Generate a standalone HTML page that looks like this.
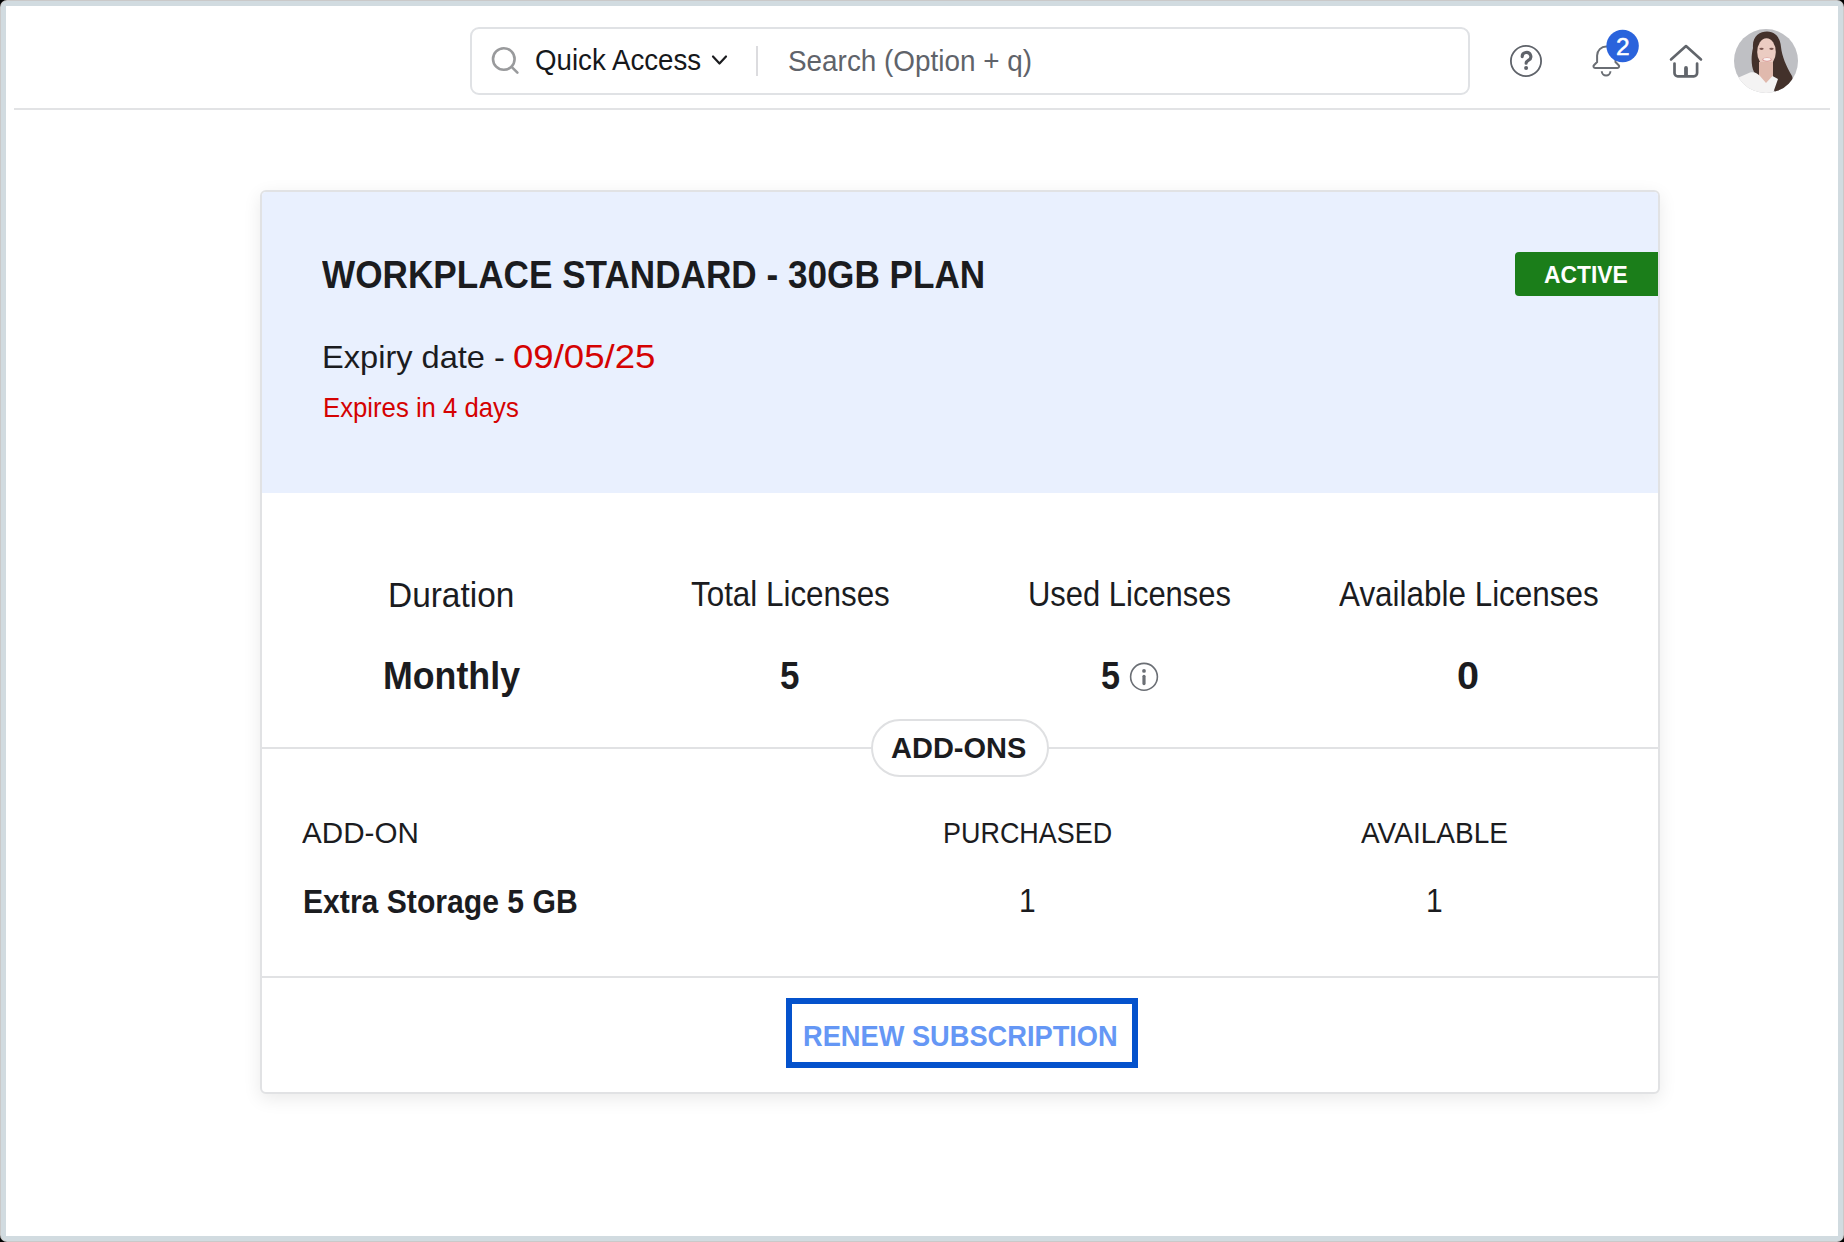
<!DOCTYPE html>
<html><head><meta charset="utf-8">
<style>
html,body{margin:0;padding:0;width:1844px;height:1242px;overflow:hidden;background:#000;}
body{font-family:"Liberation Sans", sans-serif;position:relative;}
.frame{position:absolute;left:0;top:0;width:1844px;height:1242px;border-radius:7px;background:#cac9c9;}
.frame2{position:absolute;left:1px;top:1px;width:1842px;height:1240px;border-radius:6px;background:#d1dbe0;}
.page{position:absolute;left:6px;top:6px;width:1832px;height:1230px;background:#fff;}
.t{position:absolute;white-space:nowrap;transform-origin:0 0;}
.hline{position:absolute;left:14px;top:108px;width:1816px;height:2px;background:#e2e3e5;}
.search{position:absolute;left:470px;top:27px;width:996px;height:64px;border:2px solid #e0e2e5;border-radius:9px;box-sizing:content-box;}
.card{position:absolute;left:260px;top:190px;width:1396px;height:900px;border:2px solid #e1e2e4;border-radius:6px;background:#fff;box-shadow:0 5px 18px rgba(0,0,0,0.085);overflow:hidden;}
.cardhead{position:absolute;left:0;top:0;width:1396px;height:301px;background:#e9f0fe;}
.badge{position:absolute;left:1253px;top:60px;width:143px;height:44px;background:#1b7e1a;border-radius:4px 0 0 4px;}
.sep1{position:absolute;left:262px;top:747px;width:1396px;height:2px;background:#e1e2e4;}
.pill{position:absolute;left:871px;top:719px;width:174px;height:54px;border:2px solid #dfe0e2;border-radius:30px;background:#fff;}
.sep2{position:absolute;left:262px;top:976px;width:1396px;height:2px;background:#e1e2e4;}
.btn{position:absolute;left:786px;top:998px;width:340px;height:58px;border:6px solid #0452cc;background:#fff;}
</style></head><body>
<div class="frame"></div><div class="frame2"></div>
<div class="page"></div>
<div class="hline"></div>
<div class="search"></div>
<svg style="position:absolute;left:0;top:0" width="1844" height="200">
  <!-- search icon -->
  <circle cx="503.8" cy="59" r="10.8" fill="none" stroke="#999a9c" stroke-width="2.6"/>
  <line x1="511.6" y1="66.8" x2="517.4" y2="72.6" stroke="#999a9c" stroke-width="2.6" stroke-linecap="round"/>
  <!-- chevron -->
  <polyline points="713,56.5 719.5,63.5 726,56.5" fill="none" stroke="#1b1c1f" stroke-width="2.2" stroke-linecap="round" stroke-linejoin="round"/>
  <!-- divider -->
  <line x1="757" y1="46" x2="757" y2="76" stroke="#dcdcdf" stroke-width="2"/>
  <!-- help -->
  <circle cx="1526" cy="61" r="15.1" fill="none" stroke="#5f636a" stroke-width="1.8"/>
  <path d="M1522.2 56.7 a4.3 4.1 0 1 1 6.4 3.4 c-1.7 1.0 -2.5 1.8 -2.5 3.1 v0.1" fill="none" stroke="#5f636a" stroke-width="3.1" stroke-linecap="round"/>
  <circle cx="1526.1" cy="67.9" r="2" fill="#5f636a"/>
  <!-- bell -->
  <path d="M1595 68 h22.5 c1.5 0 2.2 -1.8 1.2 -2.8 l-3.2 -3.2 v-6.4 a9.2 9.2 0 0 0 -18.4 0 v6.4 l-3.2 3.2 c-1 1 -0.3 2.8 1.2 2.8 z" fill="none" stroke="#6a6e74" stroke-width="2"/>
  <path d="M1601.8 71.2 a4.3 4.3 0 0 0 8.6 0" fill="none" stroke="#6a6e74" stroke-width="2"/>
  <circle cx="1622.6" cy="46" r="16.2" fill="#2a63dc"/>
  <!-- home -->
  <polyline points="1671,59.5 1686,46 1701,59.5" fill="none" stroke="#61656b" stroke-width="2.6" stroke-linecap="round" stroke-linejoin="round"/>
  <path d="M1674.5 63.6 v9.4 a3.3 3.3 0 0 0 3.3 3.3 h16 a3.3 3.3 0 0 0 3.3 -3.3 v-9.4" fill="none" stroke="#61656b" stroke-width="2.7" stroke-linecap="round"/>
  <line x1="1686" y1="67.9" x2="1686" y2="75" stroke="#61656b" stroke-width="3.8" stroke-linecap="round"/>
  <!-- avatar -->
  <defs><clipPath id="av"><circle cx="1766" cy="61" r="32"/></clipPath></defs>
  <g clip-path="url(#av)">
    <rect x="1734" y="29" width="64" height="64" fill="#bfc0c4"/>
    <path d="M1753 48 C1752 36 1760 31.5 1767 31.5 C1775 31.5 1780 37 1781 47 C1782 56 1786 66 1792 76 C1794 80 1790 86 1786 90 L1776 94 L1770 82 C1764 80 1757 78 1754 72 C1751 66 1751 56 1753 48 Z" fill="#43312b"/>
    <ellipse cx="1766.5" cy="52" rx="9.3" ry="13.8" fill="#ebccc2"/>
    <path d="M1759 62 L1773 62 L1773 84 L1759 84 Z" fill="#e0b9ad"/>
    <path d="M1733 80 L1750 72.5 C1755 71.5 1758 74 1760 76 L1766 83 L1772.5 76 L1778 79 L1772 96 L1733 96 Z" fill="#f4f3f3"/>
    <ellipse cx="1767" cy="59.6" rx="4.6" ry="2.1" fill="#d99a98"/>
    <ellipse cx="1767" cy="59.3" rx="3.8" ry="1.4" fill="#fbf4f4"/>
    <ellipse cx="1761.5" cy="48.8" rx="2.2" ry="1.1" fill="#7a5650"/>
    <ellipse cx="1771.5" cy="48.8" rx="2.2" ry="1.1" fill="#7a5650"/>
  </g>
</svg>
<div class="card">
  <div class="cardhead"></div>
  <div class="badge"></div>
</div>
<div class="sep1"></div>
<div class="pill"></div>
<div class="sep2"></div>
<div class="btn"></div>
<svg style="position:absolute;left:0;top:0" width="1844" height="1242">
  <circle cx="1144" cy="676.8" r="13.4" fill="none" stroke="#6b6f75" stroke-width="1.6"/>
  <circle cx="1144" cy="670.9" r="1.9" fill="#6b6f75"/>
  <line x1="1144" y1="676.3" x2="1144" y2="683.6" stroke="#6b6f75" stroke-width="3.2" stroke-linecap="round"/>
</svg>
<div class="t" style="left:322.10px;top:256.30px;font-size:38.66px;line-height:38.66px;font-weight:700;color:#1b1c1f;transform:scaleX(0.9092)">WORKPLACE STANDARD - 30GB PLAN</div>
<div class="t" style="left:534.65px;top:45.60px;font-size:29.07px;line-height:29.07px;font-weight:400;color:#16181b;transform:scaleX(0.9526)">Quick Access</div>
<div class="t" style="left:787.66px;top:46.40px;font-size:29.65px;line-height:29.65px;font-weight:400;color:#5f636a;transform:scaleX(0.9405)">Search (Option + q)</div>
<div class="t" style="left:321.67px;top:340.60px;font-size:32.12px;line-height:32.12px;font-weight:400;color:#1b1c1f;transform:scaleX(1.0147)">Expiry date -</div>
<div class="t" style="left:512.91px;top:339.90px;font-size:33.58px;line-height:33.58px;font-weight:400;color:#d50202;transform:scaleX(1.0899)">09/05/25</div>
<div class="t" style="left:322.75px;top:395.30px;font-size:27.03px;line-height:27.03px;font-weight:400;color:#d50202;transform:scaleX(0.9520)">Expires in 4 days</div>
<div class="t" style="left:387.94px;top:577.60px;font-size:34.16px;line-height:34.16px;font-weight:400;color:#1b1c1f;transform:scaleX(0.9786)">Duration</div>
<div class="t" style="left:691.00px;top:577.40px;font-size:34.16px;line-height:34.16px;font-weight:400;color:#1b1c1f;transform:scaleX(0.9185)">Total Licenses</div>
<div class="t" style="left:1027.99px;top:577.40px;font-size:34.16px;line-height:34.16px;font-weight:400;color:#1b1c1f;transform:scaleX(0.9059)">Used Licenses</div>
<div class="t" style="left:1338.70px;top:577.40px;font-size:34.16px;line-height:34.16px;font-weight:400;color:#1b1c1f;transform:scaleX(0.9199)">Available Licenses</div>
<div class="t" style="left:383.17px;top:656.10px;font-size:39.10px;line-height:39.10px;font-weight:700;color:#1b1c1f;transform:scaleX(0.9149)">Monthly</div>
<div class="t" style="left:780.31px;top:656.10px;font-size:39.10px;line-height:39.10px;font-weight:700;color:#1b1c1f;transform:scaleX(0.8950)">5</div>
<div class="t" style="left:1101.22px;top:656.10px;font-size:39.10px;line-height:39.10px;font-weight:700;color:#1b1c1f;transform:scaleX(0.8750)">5</div>
<div class="t" style="left:1457.26px;top:657.30px;font-size:38.23px;line-height:38.23px;font-weight:700;color:#1b1c1f;transform:scaleX(1.0368)">0</div>
<div class="t" style="left:891.22px;top:733.40px;font-size:29.65px;line-height:29.65px;font-weight:700;color:#1b1c1f;transform:scaleX(0.9788)">ADD-ONS</div>
<div class="t" style="left:302.20px;top:817.70px;font-size:29.51px;line-height:29.51px;font-weight:400;color:#1b1c1f;transform:scaleX(1.0043)">ADD-ON</div>
<div class="t" style="left:943.07px;top:817.50px;font-size:29.51px;line-height:29.51px;font-weight:400;color:#1b1c1f;transform:scaleX(0.9132)">PURCHASED</div>
<div class="t" style="left:1360.90px;top:817.50px;font-size:29.51px;line-height:29.51px;font-weight:400;color:#1b1c1f;transform:scaleX(0.9500)">AVAILABLE</div>
<div class="t" style="left:303.40px;top:884.70px;font-size:33.58px;line-height:33.58px;font-weight:700;color:#1b1c1f;transform:scaleX(0.8974)">Extra Storage 5 GB</div>
<div class="t" style="left:1019.14px;top:883.40px;font-size:34.01px;line-height:34.01px;font-weight:400;color:#1b1c1f;transform:scaleX(0.8813)">1</div>
<div class="t" style="left:1425.84px;top:883.40px;font-size:34.01px;line-height:34.01px;font-weight:400;color:#1b1c1f;transform:scaleX(0.8813)">1</div>
<div class="t" style="left:1543.96px;top:263.10px;font-size:24.42px;line-height:24.42px;font-weight:700;color:#ffffff;transform:scaleX(0.9352)">ACTIVE</div>
<div class="t" style="left:802.60px;top:1020.20px;font-size:30.38px;line-height:30.38px;font-weight:700;color:#6597f5;transform:scaleX(0.8966)">RENEW SUBSCRIPTION</div>
<div class="t" style="left:1615.65px;top:35.80px;font-size:23.40px;line-height:23.40px;font-weight:400;color:#ffffff;-webkit-text-stroke:0.5px #fff;transform:scaleX(1.0455)">2</div>
</body></html>
